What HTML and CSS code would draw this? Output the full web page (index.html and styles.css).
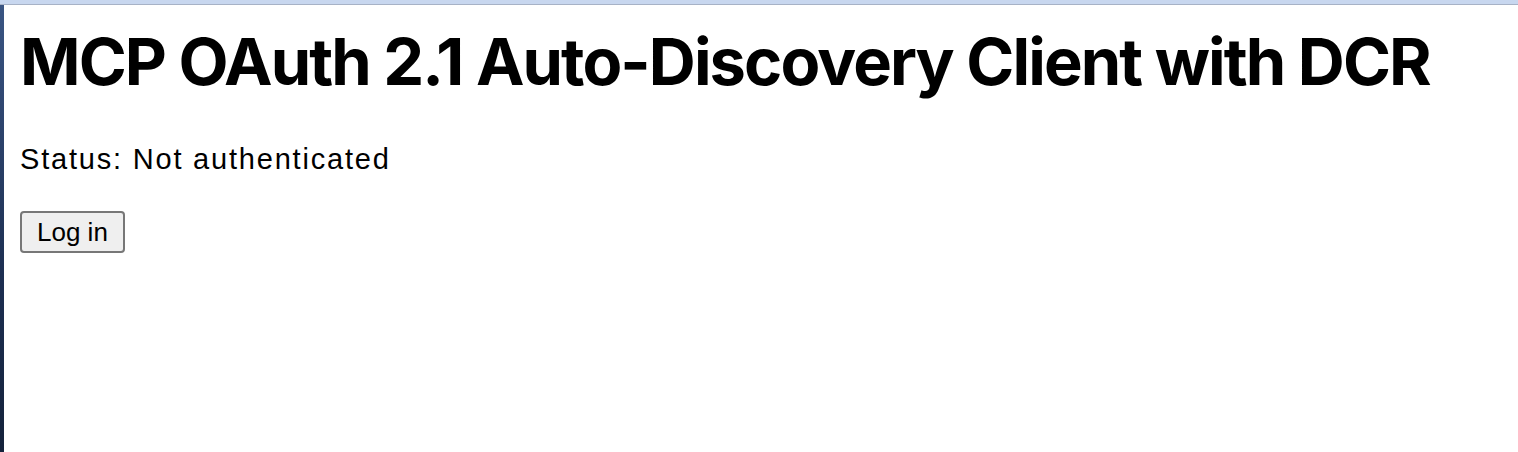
FILE: index.html
```html
<!DOCTYPE html>
<html>
<head>
<meta charset="utf-8">
<title>MCP OAuth 2.1 Auto-Discovery Client with DCR</title>
<link rel="stylesheet" href="styles.css">
</head>
<body>
<div class="topbar"></div>
<div class="window">
  <div class="sidebar"></div>
  <main class="content">
    <h1 class="title">MCP OAuth 2.1 Auto-Discovery Client with DCR</h1>
    <p class="status">Status: Not authenticated</p>
    <button class="login">Log in</button>
  </main>
</div>
</body>
</html>
```
FILE: styles.css
```css
html, body {
  margin: 0;
  padding: 0;
  height: 100%;
  background: #ffffff;
}
body {
  display: flex;
  flex-direction: column;
  font-family: "Liberation Sans", Arial, sans-serif;
  color: #000;
}
.topbar {
  height: 4px;
  background: #c8d7ef;
  border-bottom: 1px solid #a7b2c6;
  flex: none;
}
.window {
  flex: 1;
  display: flex;
}
.sidebar {
  width: 4px;
  flex: none;
  background: linear-gradient(#3a5583, #1d2f52 60%, #14223b);
}
.content {
  flex: 1;
  padding: 0 16px;
}
.title {
  font-family: Inter, "Liberation Sans", sans-serif;
  font-weight: 700;
  font-size: 65px;
  line-height: 78px;
  margin: 18px 0 0 0;
  letter-spacing: -1.9px;
}
.status {
  font-size: 29px;
  line-height: 32px;
  margin: 42px 0 0 0;
  letter-spacing: 1.8px;
}
.login {
  margin-top: 36px;
  font-family: "Liberation Sans", Arial, sans-serif;
  font-size: 26px;
  padding: 0 15px;
  background: #efefef;
  border: 2px solid #777777;
  border-radius: 4px;
  color: #000;
  height: 42px;
}
```
